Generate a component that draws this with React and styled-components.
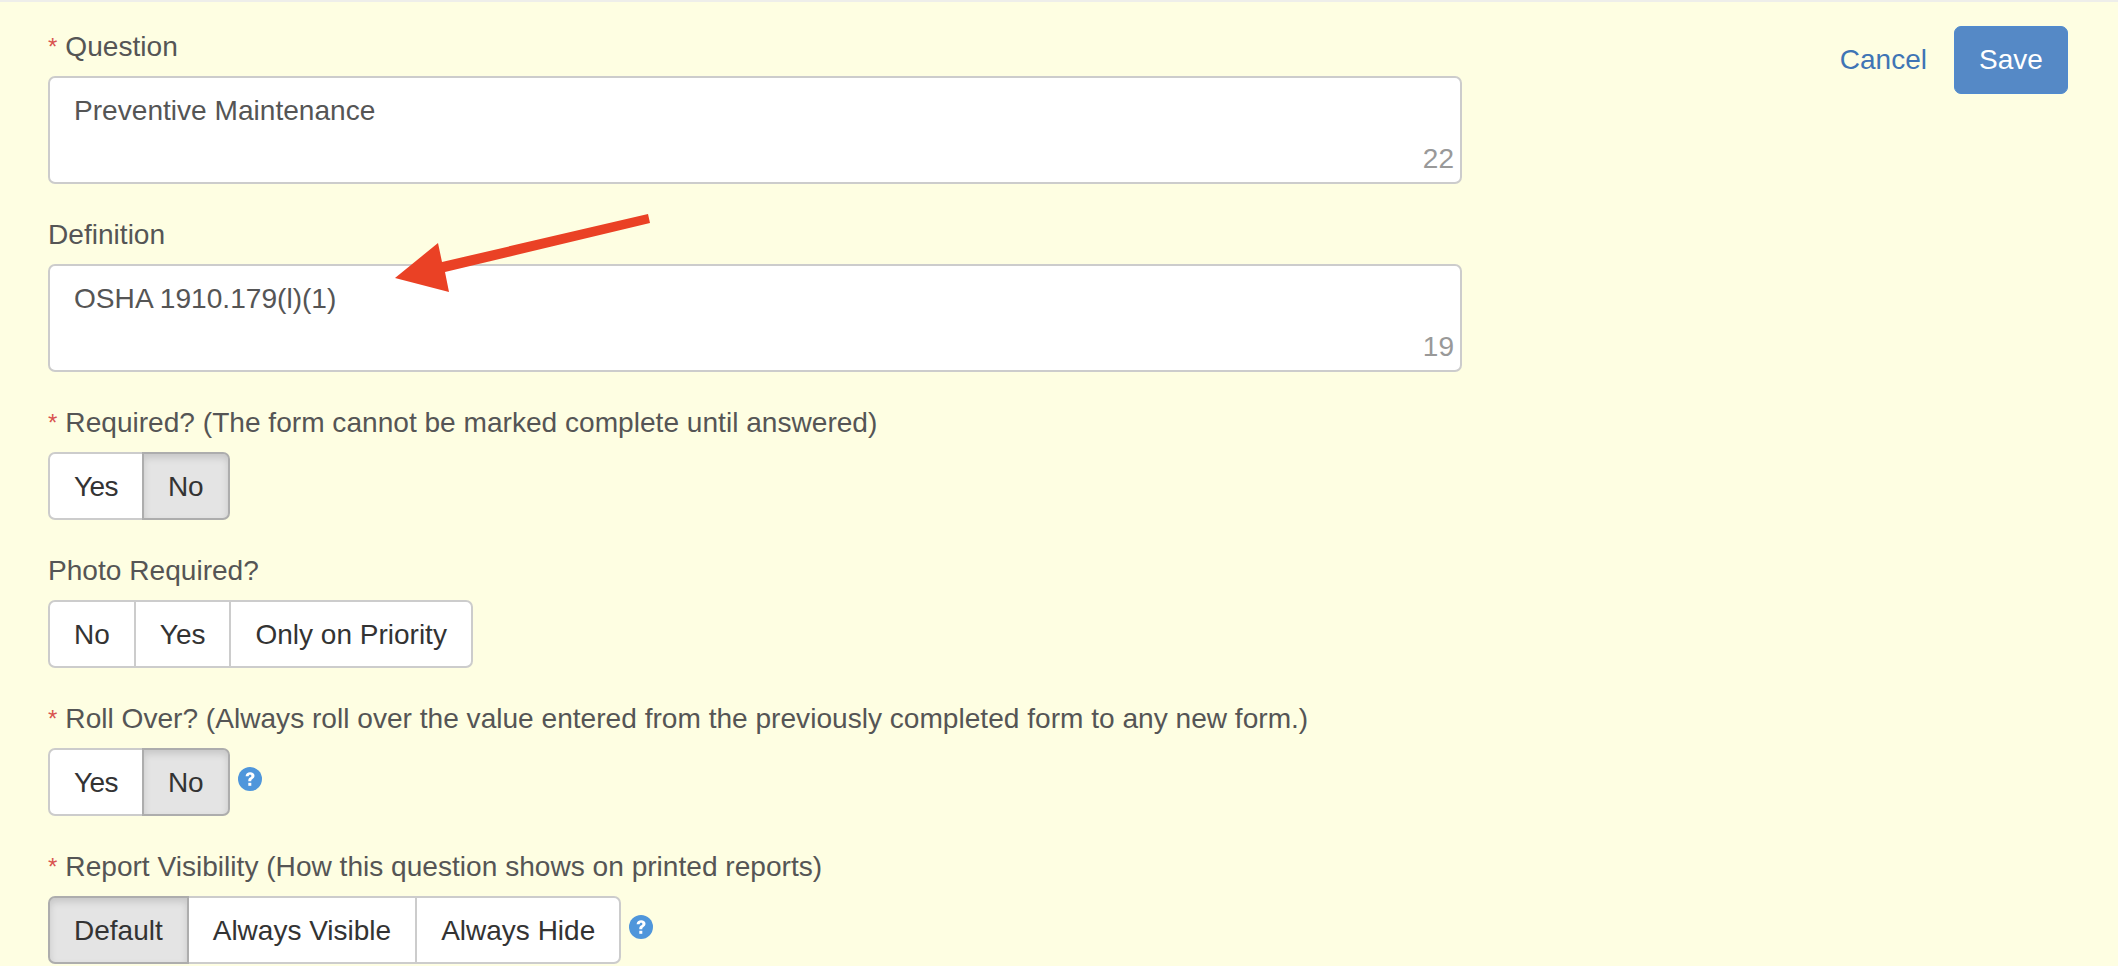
import styled, { createGlobalStyle } from "styled-components";

const GlobalStyle = createGlobalStyle`
  html, body {
    margin: 0;
    padding: 0;
    height: 966px;
    overflow: hidden;
    background: #fefee2;
    font-family: "Liberation Sans", Arial, sans-serif;
  }
`;

const Panel = styled.div`
  position: relative;
  display: flex;
  justify-content: space-between;
  align-items: flex-start;
  height: 964px;
  box-sizing: border-box;
  border-top: 2px solid #eeeeea;
  padding: 29px 50px 0 48px;
  background: #fefee2;
  overflow: hidden;
`;

const Form = styled.div`
  width: 1414px;
`;

const Field = styled.div`
  margin-bottom: 35px;
`;

const Label = styled.div`
  display: flex;
  align-items: center;
  box-sizing: border-box;
  height: 30px;
  padding-top: 2px;
  margin-bottom: 15px;
  font-size: 28.1px;
  color: #555555;
  white-space: nowrap;
`;

const Star = styled.span`
  color: #d9534f;
  margin-right: 8px;
  font-size: 24px;
`;

const AreaWrap = styled.div`
  position: relative;
  height: 108px;
`;

const Area = styled.textarea`
  display: block;
  width: 100%;
  height: 100%;
  box-sizing: border-box;
  border: 2px solid #cccccc;
  border-radius: 7px;
  background: #ffffff;
  padding: 17px 24px;
  margin: 0;
  resize: none;
  outline: none;
  font-family: inherit;
  font-size: 28.1px;
  line-height: 32px;
  color: #555555;
`;

const Count = styled.span`
  position: absolute;
  right: 8px;
  bottom: 9px;
  font-size: 28px;
  line-height: 32px;
  color: #999999;
`;

const ButtonRow = styled.div`
  display: flex;
  align-items: flex-start;
`;

const Group = styled.div`
  display: inline-flex;
  height: 68px;
`;

const Toggle = styled.button`
  height: 100%;
  padding: 2px 24px 0;
  margin: 0 0 0 -2px;
  box-sizing: border-box;
  border: 2px solid ${(props) => (props.$active ? "#adadad" : "#cccccc")};
  background: ${(props) => (props.$active ? "#e4e4e4" : "#ffffff")};
  box-shadow: ${(props) =>
    props.$active ? "inset 0 4px 7px rgba(0, 0, 0, 0.125)" : "none"};
  font-family: inherit;
  font-size: 28px;
  letter-spacing: ${(props) => (props.$tight ? "-0.6px" : "normal")};
  color: #333333;
  position: relative;
  z-index: ${(props) => (props.$active ? 1 : 0)};

  &:first-child {
    margin-left: 0;
    border-radius: 7px 0 0 7px;
  }
  &:last-child {
    border-radius: 0 7px 7px 0;
  }
`;

const Help = styled.svg`
  width: 24px;
  height: 24px;
  margin: 19px 0 0 8px;
  flex: none;
`;

const Actions = styled.div`
  display: flex;
  align-items: center;
  gap: 27px;
  margin-top: -5px;
`;

const Cancel = styled.a`
  font-size: 28px;
  color: #3f75b5;
`;

const Save = styled.button`
  width: 114px;
  height: 68px;
  border: 1px solid #4f8ad0;
  border-radius: 7px;
  background: #5589c6;
  color: #ffffff;
  font-family: inherit;
  font-size: 28px;
`;

const Arrow = styled.svg`
  position: absolute;
  left: 0;
  top: -2px;
  width: 700px;
  height: 320px;
  pointer-events: none;
`;

function HelpIcon() {
  return (
    <Help viewBox="0 0 24 24">
      <circle cx="12" cy="12" r="12" fill="#4f96db" />
      <path
        d="M7.6 9.2c.2-2.6 2-4 4.6-4 2.500 0 4.300 1.400 4.300 3.600 0 1.600-.9 2.400-2 3.200-.9.6-1.200 1-1.200 1.900v.4h-3v-.7c0-1.500.6-2.300 1.700-3.100.9-.6 1.400-1 1.400-1.600 0-.7-.6-1.100-1.300-1.100-.9 0-1.400.6-1.500 1.500z"
        fill="#ffffff"
      />
      <rect x="10.300" y="15.800" width="3" height="3" fill="#ffffff" />
    </Help>
  );
}

function Required({ children }) {
  return (
    <Label>
      <Star>*</Star>
      {children}
    </Label>
  );
}

export default function App() {
  return (
    <>
      <GlobalStyle />
      <Panel>
        <Form>
          <Field>
            <Required>Question</Required>
            <AreaWrap>
              <Area readOnly value="Preventive Maintenance" />
              <Count>22</Count>
            </AreaWrap>
          </Field>
          <Field>
            <Label>Definition</Label>
            <AreaWrap>
              <Area readOnly value="OSHA 1910.179(l)(1)" />
              <Count>19</Count>
            </AreaWrap>
          </Field>
          <Field>
            <Required>
              Required? (The form cannot be marked complete until answered)
            </Required>
            <ButtonRow>
              <Group>
                <Toggle $tight>Yes</Toggle>
                <Toggle $active>No</Toggle>
              </Group>
            </ButtonRow>
          </Field>
          <Field>
            <Label>Photo Required?</Label>
            <ButtonRow>
              <Group>
                <Toggle>No</Toggle>
                <Toggle>Yes</Toggle>
                <Toggle>Only on Priority</Toggle>
              </Group>
            </ButtonRow>
          </Field>
          <Field>
            <Required>
              Roll Over? (Always roll over the value entered from the previously
              completed form to any new form.)
            </Required>
            <ButtonRow>
              <Group>
                <Toggle $tight>Yes</Toggle>
                <Toggle $active>No</Toggle>
              </Group>
              <HelpIcon />
            </ButtonRow>
          </Field>
          <Field>
            <Required>
              Report Visibility (How this question shows on printed reports)
            </Required>
            <ButtonRow>
              <Group>
                <Toggle $active>Default</Toggle>
                <Toggle>Always Visible</Toggle>
                <Toggle>Always Hide</Toggle>
              </Group>
              <HelpIcon />
            </ButtonRow>
          </Field>
        </Form>
        <Actions>
          <Cancel>Cancel</Cancel>
          <Save>Save</Save>
        </Actions>
        <Arrow viewBox="0 0 700 320">
          <polygon
            points="648,214 650,223 445,272 449,292 395,278 438,243 442,262"
            fill="#ea4125"
          />
        </Arrow>
      </Panel>
    </>
  );
}
